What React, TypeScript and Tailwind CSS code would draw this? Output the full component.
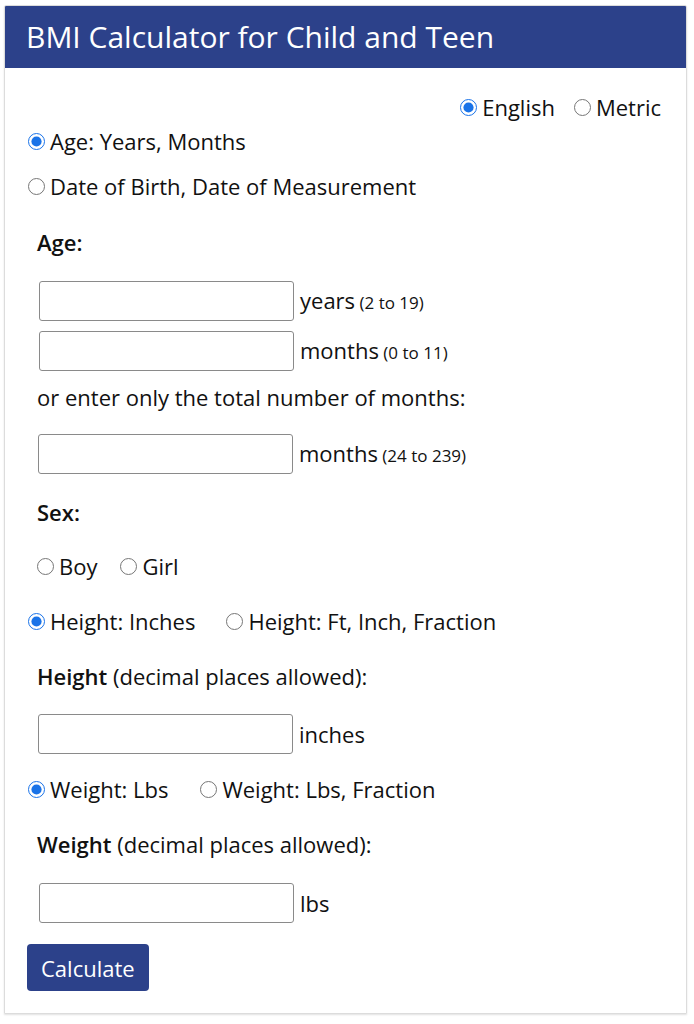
import React from "react";

function Radio({ name, label, checked, className = "" }: { name: string; label: string; checked?: boolean; className?: string }) {
  return (
    <label className={"flex items-center h-[30px] " + className}>
      <input
        type="radio"
        name={name}
        defaultChecked={checked}
        className="m-0 mr-[5px] h-[17px] w-[17px] accent-[#1a73e8]"
      />
      <span>{label}</span>
    </label>
  );
}

function Field({ unit, hint, className = "" }: { unit: string; hint?: string; className?: string }) {
  return (
    <div className={"flex items-center " + className}>
      <input
        type="text"
        className="h-[40px] w-[255px] rounded-[3px] border border-[#8a8a8a] bg-white px-2"
      />
      <span className="ml-[6px]">
        {unit}
        {hint && <span className="text-[17px]"> {hint}</span>}
      </span>
    </div>
  );
}

export default function App() {
  return (
    <div
      className="min-h-screen bg-white pt-[5px] text-[22px] text-[#111]"
      style={{ fontFamily: '"Open Sans", "Noto Sans", sans-serif' }}
    >
      <div className="mx-[4px] w-[683px] overflow-hidden rounded-t-[2px] border border-[#dcdcdc] shadow-[0_1px_2px_rgba(0,0,0,0.12)]">
        <div className="flex h-[62px] items-center bg-[#2c418a] pl-[21px]">
          <h1 className="text-[30px] font-normal leading-none text-white">BMI Calculator for Child and Teen</h1>
        </div>
        <form className="flex flex-col px-[23px] pb-[22px] pt-[24px] leading-[30px]">
          <div className="flex justify-end gap-[19px] pr-[2px]">
            <Radio name="units" label="English" checked />
            <Radio name="units" label="Metric" />
          </div>
          <Radio name="agemode" label="Age: Years, Months" checked className="mt-[4px]" />
          <Radio name="agemode" label="Date of Birth, Date of Measurement" className="mt-[15px]" />

          <div className="ml-[9px] mt-[26px] font-semibold">Age:</div>
          <Field unit="years" hint="(2 to 19)" className="ml-[11px] mt-[24px]" />
          <Field unit="months" hint="(0 to 11)" className="ml-[11px] mt-[10px]" />
          <div className="ml-[9px] mt-[11px]">or enter only the total number of months:</div>
          <Field unit="months" hint="(24 to 239)" className="ml-[10px] mt-[22px]" />

          <div className="ml-[9px] mt-[23px] font-semibold">Sex:</div>
          <div className="ml-[9px] mt-[24px] flex gap-[23px]">
            <Radio name="sex" label="Boy" />
            <Radio name="sex" label="Girl" />
          </div>

          <div className="mt-[25px] flex gap-[31px]">
            <Radio name="hmode" label="Height: Inches" checked />
            <Radio name="hmode" label="Height: Ft, Inch, Fraction" />
          </div>
          <div className="ml-[9px] mt-[25px]">
            <span className="font-semibold">Height</span> (decimal places allowed):
          </div>
          <Field unit="inches" className="ml-[10px] mt-[23px]" />

          <div className="mt-[20px] flex gap-[32px]">
            <Radio name="wmode" label="Weight: Lbs" checked />
            <Radio name="wmode" label="Weight: Lbs, Fraction" />
          </div>
          <div className="ml-[9px] mt-[25px]">
            <span className="font-semibold">Weight</span> (decimal places allowed):
          </div>
          <Field unit="lbs" className="ml-[11px] mt-[24px]" />

          <div className="mt-[21px]">
            <button
              type="button"
              className="-ml-[1px] h-[47px] rounded-[4px] bg-[#2c418a] px-[14px] text-[22px] text-white"
            >
              Calculate
            </button>
          </div>
        </form>
      </div>
    </div>
  );
}
